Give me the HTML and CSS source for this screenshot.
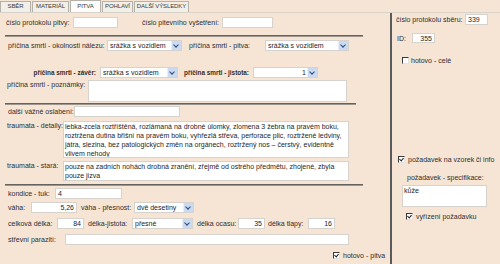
FILE: index.html
```html
<!DOCTYPE html>
<html lang="cs">
<head>
  <meta charset="UTF-8" />
  <title>Pitva</title>
  <link rel="stylesheet" href="styles.css">
</head>
<body>

  <div class="tabs">
    <div class="tab t-sber">SBĚR</div>
    <div class="tab t-mat">MATERIÁL</div>
    <div class="tab t-pitva active">PITVA</div>
    <div class="tab t-pohl">POHLAVÍ</div>
    <div class="tab t-dalsi">DALŠÍ VÝSLEDKY</div>
  </div>

  <div class="panel">
    <!-- ---------- PITVA ---------- -->
    <div class="main">
      <div class="row r1">
        <span class="lbl w67">číslo protokolu pitvy:</span>
        <span class="field w45"></span>
        <span class="lbl w80 ml24">číslo pitevního vyšetření:</span>
        <span class="field w51"></span>
      </div>

      <div class="sep sep-wide"></div>

      <div class="row r2">
        <span class="lbl w99">příčina smrti - okolnosti nálezu:</span>
        <span class="select w75">srážka s vozidlem<i class="btn"></i></span>
        <span class="lbl w76 ml7">příčina smrti - pitva:</span>
        <span class="select w84">srážka s vozidlem<i class="btn"></i></span>
      </div>

      <div class="row r3">
        <span class="lbl bold right w98">příčina smrti - závěr:</span>
        <span class="select w78 ml2">srážka s vozidlem<i class="btn"></i></span>
        <span class="lbl bold w69 ml6">příčina smrti - jistota:</span>
        <span class="select num w65">1<i class="btn"></i></span>
      </div>

      <div class="row top r4">
        <span class="lbl w81">příčina smrti - poznámky:</span>
        <span class="memo w259 h22"></span>
      </div>

      <div class="sep sep-short"></div>

      <div class="row r5">
        <span class="lbl w66">další vážné oslabení:</span>
        <span class="field w106"></span>
      </div>

      <div class="row top r6">
        <span class="lbl w56">traumata - detaily:</span>
        <span class="memo w286 h37">lebka-zcela roztříštěná, rozlámaná na drobné úlomky, zlomena 3 žebra na pravém boku, roztržena dutina břišní na pravém boku, vyhřezlá střeva, perforace plic, roztržené ledviny, játra, slezina, bez patologických změn na orgánech, roztržený nos – čerstvý, evidentně vlivem nehody</span>
      </div>

      <div class="row top r7">
        <span class="lbl w56">traumata - stará:</span>
        <span class="memo w286 h20">pouze na zadních nohách drobná zranění, zřejmě od ostrého předmětu, zhojené, zbyla pouze jizva</span>
      </div>

      <div class="sep sep-wide"></div>

      <div class="row r8">
        <span class="lbl w47">kondice - tuk:</span>
        <span class="field w67">4</span>
      </div>

      <div class="row r9">
        <span class="lbl w23">váha:</span>
        <span class="field num w46">5,26</span>
        <span class="lbl w53 ml4">váha - přesnost:</span>
        <span class="select w60">dvě desetiny<i class="btn"></i></span>
      </div>

      <div class="row r10">
        <span class="lbl w49">celková délka:</span>
        <span class="field num w27">84</span>
        <span class="lbl w44 ml4">délka-jistota:</span>
        <span class="select w61">přesné<i class="btn"></i></span>
        <span class="lbl w41 ml4">délka ocasu:</span>
        <span class="field num w27">35</span>
        <span class="lbl w40 ml3">délka tlapy:</span>
        <span class="field num w27">16</span>
      </div>

      <div class="row r11">
        <span class="lbl w57">střevní parazití:</span>
        <span class="field w284"></span>
      </div>

      <div class="row r12">
        <span class="check on"></span>
        <span class="lbl">hotovo - pitva</span>
      </div>
    </div>

    <!-- ---------- PRAVÝ SLOUPEC ---------- -->
    <div class="side">
      <div class="row s1">
        <span class="lbl w69">číslo protokolu sběru:</span>
        <span class="field w23">339</span>
      </div>

      <div class="row s2">
        <span class="lbl w15">ID:</span>
        <span class="field num w23">355</span>
      </div>

      <div class="row s3">
        <span class="check"></span>
        <span class="lbl">hotovo - celé</span>
      </div>

      <div class="row s4">
        <span class="check on"></span>
        <span class="lbl">požadavek na vzorek či info</span>
      </div>

      <div class="row s5">
        <span class="lbl">požadavek - specifikace:</span>
      </div>

      <div class="row top s6">
        <span class="memo w85 h22">kůže</span>
      </div>

      <div class="row s7">
        <span class="check on"></span>
        <span class="lbl">vyřízení požadavku</span>
      </div>
    </div>
  </div>

</body>
</html>
```

FILE: styles.css
```css
body {
  margin: 0;
  width: 500px;
  height: 264px;
  overflow: hidden;
  background: #f6e4d4;
  font-family: 'Liberation Sans', Arial, sans-serif;
  font-size: 7px;
  color: #2f2f2f;
}

/* ---------- TABS ---------- */
.tabs {
  display: flex;
  align-items: flex-end;
  height: 12px;
}

.tab {
  box-sizing: border-box;
  height: 11px;
  line-height: 9px;
  text-align: center;
  white-space: nowrap;
  background: #f2efe9;
  border: 1px solid #b4b0aa;
  border-bottom: none;
  margin-right: 1px;
  color: #3a3a3a;
  font-size: 6px;
  letter-spacing: -0.1px;
}

.tab.active {
  height: 12px;
  line-height: 10px;
  background: #fdfcfa;
}

.t-sber  { width: 31px; }
.t-mat   { width: 37px; }
.t-pitva { width: 31px; }
.t-pohl  { width: 31px; }
.t-dalsi { width: 55px; }

/* ---------- PANEL ---------- */
.panel {
  display: flex;
  height: 252px;
  border-top: 1px solid #d9d2ca;
  box-sizing: border-box;
}

.main {
  width: 390px;
}

.side {
  flex: 1;
  border-left: 2px solid #5a5a5a;
}

.row {
  display: flex;
  align-items: center;
  height: 11px;
}

.row.top {
  align-items: flex-start;
  height: auto;
}

.lbl {
  flex: none;
  white-space: nowrap;
}

.bold {
  font-weight: bold;
  font-size: 6.4px;
}

.right { text-align: right; padding-right: 2px; box-sizing: border-box; }

.field,
.select,
.memo {
  flex: none;
  box-sizing: border-box;
  background: #fff;
  border: 1px solid #d6d2ce;
  color: #1e1e28;
  padding: 0 2px;
  white-space: nowrap;
  overflow: hidden;
}

.field {
  height: 11px;
  line-height: 9px;
}

.field.num { text-align: right; }

.select {
  position: relative;
  height: 11px;
  line-height: 9px;
  padding-right: 11px;
}

.select.num { text-align: right; }

.select .btn {
  position: absolute;
  top: 0;
  right: 0;
  width: 9px;
  height: 9px;
  background: #c9daf1;
  border-left: 1px solid #e8eef8;
}

.select .btn::after {
  content: "";
  position: absolute;
  left: 2px;
  top: 2px;
  width: 3px;
  height: 3px;
  border-right: 1.2px solid #2b4a7c;
  border-bottom: 1.2px solid #2b4a7c;
  transform: rotate(45deg);
}

.memo {
  white-space: normal;
  line-height: 9px;
  padding: 0 1px;
}

.sep {
  height: 2px;
  box-sizing: border-box;
  border-top: 1px solid #66625e;
  border-bottom: 1px solid #9c968f;
  margin-left: 5px;
}

.sep-wide { width: 358px; }
.sep-short { width: 351px; }

.check {
  flex: none;
  box-sizing: border-box;
  width: 7px;
  height: 7px;
  background: #fff;
  border-top: 1px solid #3a3a3a;
  border-left: 1px solid #3a3a3a;
  border-right: 1px solid #e2e2e2;
  border-bottom: 1px solid #e2e2e2;
  margin-right: 3px;
  position: relative;
}

.check.on::after {
  content: "";
  position: absolute;
  left: 1px;
  top: 0;
  width: 2px;
  height: 3px;
  border-right: 1.3px solid #222;
  border-bottom: 1.3px solid #222;
  transform: rotate(40deg);
}

/* ---------- MAIN ROWS ---------- */
.r1  { margin-top: 4px; padding-left: 6px; }
.r1 + .sep { margin-top: 7px; }
.r2  { margin-top: 3px; padding-left: 8px; }
.r3  { margin-top: 16px; }
.r4  { margin-top: 2px; padding-left: 7px; }
.r4 .lbl { margin-top: 1px; }
.sep-short { margin-top: 1px; }
.r5  { margin-top: 1px; padding-left: 8px; }
.r6  { margin-top: 4px; padding-left: 7px; }
.r6 .lbl, .r7 .lbl { margin-top: 1px; }
.r7  { margin-top: 3px; padding-left: 7px; }
.r7 + .sep { margin-top: 3px; }
.r8  { margin-top: 2px; padding-left: 8px; }
.r9  { margin-top: 3px; padding-left: 8px; }
.r10 { margin-top: 5px; padding-left: 8px; }
.r11 { margin-top: 5px; padding-left: 8px; }
.r12 { margin-top: 5px; padding-left: 333px; }

/* ---------- SIDE ROWS ---------- */
.s1 { margin-top: 1px; padding-left: 4px; }
.s2 { margin-top: 8px; padding-left: 5px; height: 10px; }
.s2 .field { height: 10px; }
.s3 { margin-top: 12px; padding-left: 10px; }
.s3 .check { margin-right: 2px; }
.s4 { margin-top: 88px; padding-left: 6px; }
.s5 { margin-top: 7px; padding-left: 15px; }
.s6 { margin-top: 2px; padding-left: 10px; }
.s7 { margin-top: 4px; padding-left: 14px; }

/* ---------- WIDTHS ---------- */
.w15  { width: 15px; }
.w23  { width: 23px; }
.w27  { width: 27px; }
.w40  { width: 40px; }
.w41  { width: 41px; }
.w44  { width: 44px; }
.w45  { width: 45px; }
.w46  { width: 46px; }
.w47  { width: 47px; }
.w49  { width: 49px; }
.w51  { width: 51px; }
.w53  { width: 53px; }
.w56  { width: 56px; }
.w57  { width: 57px; }
.w60  { width: 60px; }
.w61  { width: 61px; }
.w65  { width: 65px; }
.w66  { width: 66px; }
.w67  { width: 67px; }
.w69  { width: 69px; }
.w75  { width: 75px; }
.w76  { width: 76px; }
.w78  { width: 78px; }
.w80  { width: 80px; }
.w81  { width: 81px; }
.w84  { width: 84px; }
.w85  { width: 85px; }
.w98  { width: 98px; }
.w99  { width: 99px; }
.w106 { width: 106px; }
.w259 { width: 259px; }
.w284 { width: 284px; }
.w286 { width: 286px; }

.h20 { height: 20px; }
.h22 { height: 22px; }
.h37 { height: 37px; }

.ml2  { margin-left: 2px; }
.ml3  { margin-left: 3px; }
.ml4  { margin-left: 4px; }
.ml6  { margin-left: 6px; }
.ml7  { margin-left: 7px; }
.ml24 { margin-left: 24px; }
```
